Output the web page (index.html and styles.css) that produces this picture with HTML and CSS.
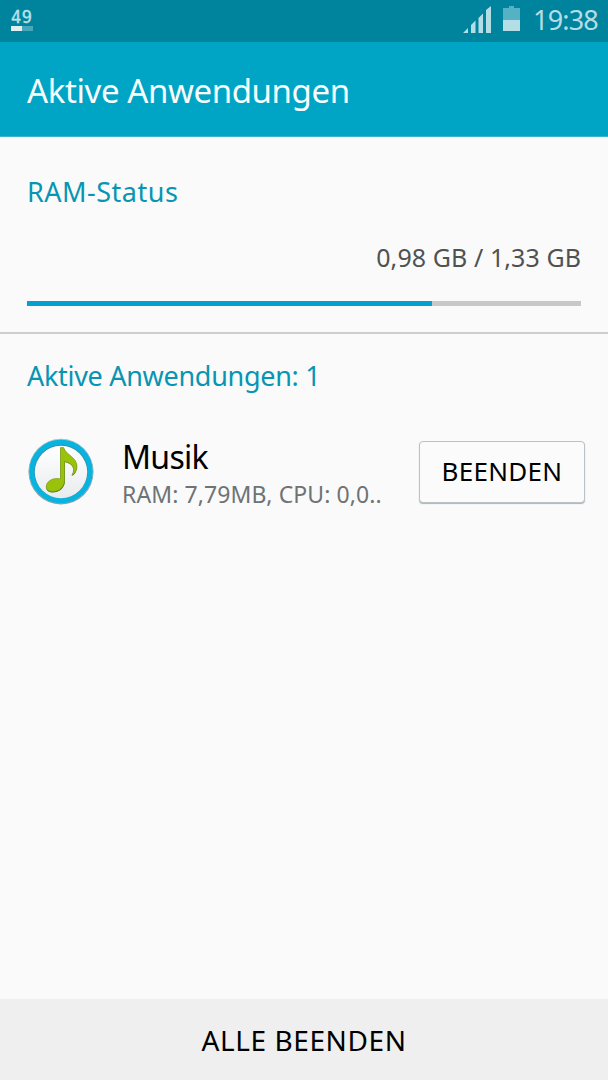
FILE: index.html
```html
<!DOCTYPE html>
<html lang="de">
<head>
<meta charset="utf-8">
<title>Aktive Anwendungen</title>
<link rel="stylesheet" href="styles.css">
</head>
<body>
<div class="statusbar">
  <div class="badge">
    <span class="badge-number">49</span>
    <div class="badge-bar"></div>
  </div>
  <div class="tray">
    <svg class="signal" width="28" height="28" viewBox="0 0 28 28" fill="#b3dee6">
      <path d="M0 27L5 22V27ZM8 27V19L12.500 14.500V27ZM15.500 27V12L20 7.500V27ZM23 27V4L28 0V27Z"/>
    </svg>
    <svg class="battery" width="17" height="26" viewBox="0 0 17 26">
      <path d="M6 0H11V2H17V14H0V2H6Z" fill="#55b2c4"/>
      <rect y="14" width="17" height="11" fill="#b3dee6"/>
    </svg>
    <span class="clock">19:38</span>
  </div>
</div>
<header class="header"><h1 class="title">Aktive Anwendungen</h1></header>
<section class="ram">
  <h2 class="heading heading-ram">RAM-Status</h2>
  <div class="amount">0,98 GB / 1,33 GB</div>
  <div class="meter"><div class="meter-fill"></div></div>
</section>
<main class="apps">
  <h2 class="heading heading-apps">Aktive Anwendungen: 1</h2>
  <div class="app">
    <svg class="app-icon" width="68" height="68" viewBox="0 0 68 68">
      <defs>
        <linearGradient id="disc" x1="0" y1="0" x2="0" y2="1"><stop offset="0" stop-color="#fff"/><stop offset="1" stop-color="#e9ebed"/></linearGradient>
      </defs>
      <circle cx="34" cy="34" r="32.500" fill="#8d9da3"/>
      <circle cx="34" cy="33" r="32.300" fill="#a9c4cc"/>
      <circle cx="34" cy="33.500" r="31.800" fill="#08b4df"/>
      <circle cx="34" cy="33.500" r="26.800" fill="#3790a5"/>
      <circle cx="34" cy="34" r="26.200" fill="url(#disc)"/>
      <path d="M33.500 10H37C39 18 50.500 20 50 30C49.500 34 47.500 37 44.500 38C49 31 46 26 38 24V43C38 50 32 54.500 26 54.500C21 54.500 18.500 52 19.500 48C21 43 27 40 33.500 41.500Z" fill="#527516"/>
      <path d="M33.500 9.500H36.500C38.500 17 50.500 19 50 29C49.500 33 47.500 36 45 37C49 30 45 25 37.500 23.500V42C37.500 49 32 53.500 26 53.500C21 53.500 18.500 51 19.500 47C21 42 27 39.500 33.500 41Z" fill="#9ac20b" stroke="#7b9d20" stroke-width=".7"/>
    </svg>
    <div class="app-info">
      <div class="app-name">Musik</div>
      <div class="app-usage">RAM: 7,79MB, CPU: 0,0..</div>
    </div>
    <button class="end">BEENDEN</button>
  </div>
</main>
<button class="end-all">ALLE BEENDEN</button>
</body>
</html>
```
FILE: styles.css
```css
* { box-sizing: border-box; }
body {
  margin: 0;
  height: 1080px;
  display: flex;
  flex-direction: column;
  overflow: hidden;
  background: #fafafa;
  font-family: "Noto Sans", "Open Sans", sans-serif;
}
h1, h2 { margin: 0; font-weight: 400; white-space: nowrap; }
button { margin: 0; padding: 0; border: 0; font: inherit; color: #000; white-space: nowrap; }
.statusbar {
  height: 42px;
  flex: none;
  display: flex;
  justify-content: space-between;
  padding: 0 8px 0 11px;
  background: #00849e;
}
.badge { width: 22px; padding-top: 8px; }
.badge-number {
  display: block;
  height: 18px;
  font-family: "DejaVu Sans Mono", monospace;
  font-size: 17px;
  line-height: 18px;
  letter-spacing: .6px;
  color: #b9e1e7;
  -webkit-text-stroke: .4px #b9e1e7;
}
.badge-bar { height: 5px; background: linear-gradient(90deg, #e1eff1 50%, #48a8bb 50%); }
.tray { display: flex; align-items: flex-start; }
.signal { margin-top: 6px; }
.battery { margin: 6px 0 0 12px; }
.clock {
  width: 67px;
  margin-left: 13px;
  font-size: 27px;
  line-height: 40px;
  letter-spacing: -.8px;
  color: #b3dee6;
  white-space: nowrap;
}
.header {
  height: 95px;
  flex: none;
  padding: 2px 27px 0;
  background: #00a5c6;
  border-bottom: 1px solid #3cb4cd;
}
.title { font-size: 33px; line-height: 94px; letter-spacing: -.4px; color: #f8fdfd; }
.ram {
  height: 197px;
  flex: none;
  padding: 35px 27px 0;
  border-bottom: 2px solid #cdcdcd;
}
.heading { font-size: 27px; line-height: 40px; color: #0795b2; }
.heading-ram { letter-spacing: .5px; }
.heading-apps { letter-spacing: -.3px; }
.amount {
  margin-top: 25px;
  font-size: 25px;
  line-height: 40px;
  letter-spacing: .08px;
  text-align: right;
  color: #505252;
}
.meter { height: 5px; margin-top: 24px; background: #c8c8c8; }
.meter-fill { width: 73.1%; height: 5px; background: #04a0d4; }
.apps { flex: 1; padding: 22px 23px 0 27px; }
.app { display: flex; align-items: flex-start; margin-top: 38px; }
.app-icon { flex: none; margin: 4px 0 0; }
.app-info { flex: 1; min-width: 0; margin-left: 27px; white-space: nowrap; }
.app-name { padding-top: 1px; font-size: 32px; line-height: 43px; letter-spacing: -.7px; color: #000; }
.app-usage { font-size: 23px; line-height: 32px; letter-spacing: .1px; color: #6e7375; }
.end {
  width: 166px;
  height: 62px;
  flex: none;
  margin-top: 7px;
  padding-bottom: 2px;
  border: 1px solid #b9c3c5;
  border-radius: 4px;
  background: #fbfbfb;
  box-shadow: 0 1px 1px #abb5b6;
  font-size: 26px;
  letter-spacing: .3px;
}
.end-all { height: 81px; flex: none; background: #efefef; font-size: 28px; letter-spacing: .6px; }
```
